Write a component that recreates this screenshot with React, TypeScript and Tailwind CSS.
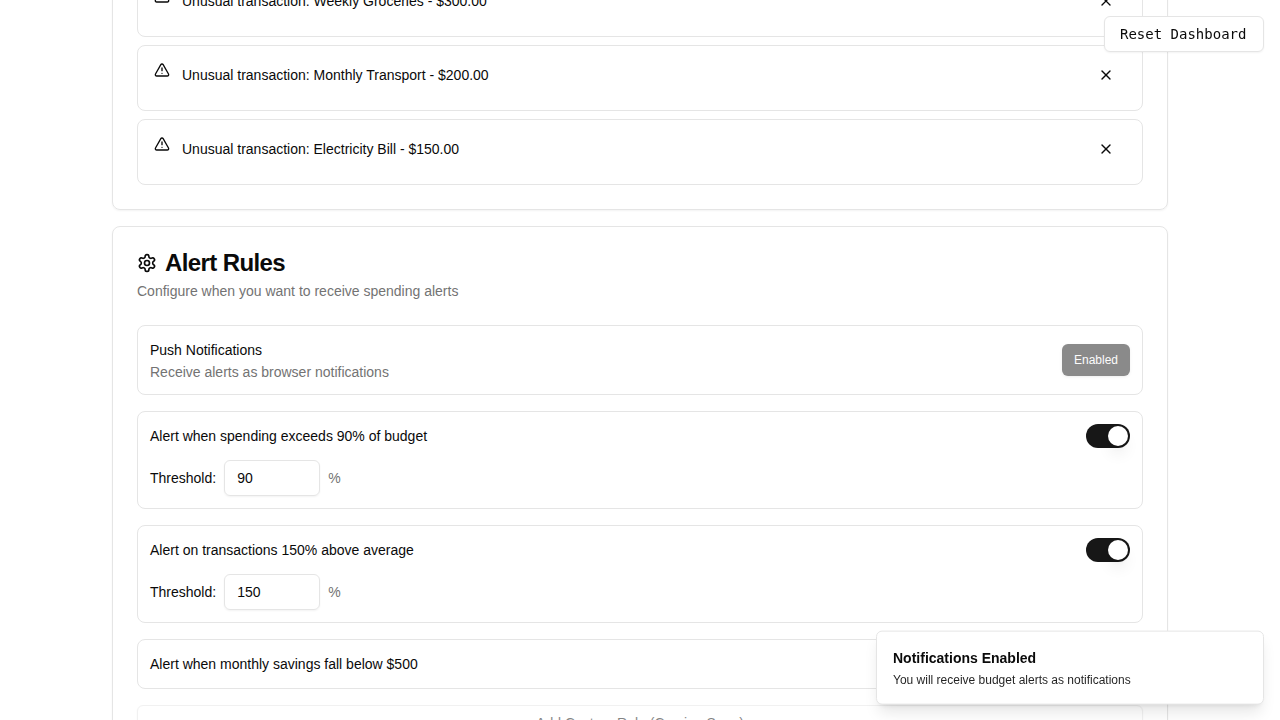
import React, { useState } from "react";
import { TriangleAlert, X } from "lucide-react";

const transactions = ["Weekly Groceries - $300.00", "Monthly Transport - $200.00", "Electricity Bill - $150.00"];

function GearIcon() {
  return (
    <svg
      viewBox="0 0 24 24"
      fill="none"
      stroke="currentColor"
      strokeWidth="2"
      strokeLinecap="round"
      strokeLinejoin="round"
      className="h-5 w-5"
    >
      <path d="M12.22 2h-.44a2 2 0 0 0-2 2v.18a2 2 0 0 1-1 1.73l-.43.25a2 2 0 0 1-2 0l-.15-.08a2 2 0 0 0-2.73.73l-.22.38a2 2 0 0 0 .73 2.73l.15.1a2 2 0 0 1 1 1.72v.51a2 2 0 0 1-1 1.74l-.15.09a2 2 0 0 0-.73 2.73l.22.38a2 2 0 0 0 2.73.73l.15-.08a2 2 0 0 1 2 0l.43.25a2 2 0 0 1 1 1.73V20a2 2 0 0 0 2 2h.44a2 2 0 0 0 2-2v-.18a2 2 0 0 1 1-1.73l.43-.25a2 2 0 0 1 2 0l.15.08a2 2 0 0 0 2.73-.73l.22-.39a2 2 0 0 0-.73-2.73l-.15-.08a2 2 0 0 1-1-1.74v-.5a2 2 0 0 1 1-1.74l.15-.09a2 2 0 0 0 .73-2.73l-.22-.38a2 2 0 0 0-2.73-.73l-.15.08a2 2 0 0 1-2 0l-.43-.25a2 2 0 0 1-1-1.73V4a2 2 0 0 0-2-2z" />
      <circle cx="12" cy="12" r="3" />
    </svg>
  );
}

function AlertItem({ text }: { text: string }) {
  return (
    <div className="flex h-[66px] items-start rounded-lg border border-neutral-200 px-4">
      <TriangleAlert className="mt-4 h-4 w-4 shrink-0" />
      <div className="ml-3 mt-[19px] flex-1 text-sm">Unusual transaction: {text}</div>
      <button className="mr-3 mt-[21px]" aria-label="Dismiss">
        <X className="h-4 w-4" />
      </button>
    </div>
  );
}

function Toggle({ on, onClick }: { on: boolean; onClick: () => void }) {
  return (
    <button
      role="switch"
      aria-checked={on}
      onClick={onClick}
      className={`flex h-6 w-11 items-center rounded-full border-2 border-transparent ${on ? "justify-end bg-neutral-900" : "justify-start bg-neutral-200"}`}
    >
      <span className="h-5 w-5 rounded-full bg-white shadow-lg" />
    </button>
  );
}

function Rule({ label, threshold }: { label: string; threshold?: string }) {
  const [on, setOn] = useState(true);
  return (
    <div className="flex flex-col gap-3 rounded-lg border border-neutral-200 p-3">
      <div className="flex h-6 items-center justify-between">
        <span>{label}</span>
        <Toggle on={on} onClick={() => setOn(!on)} />
      </div>
      {threshold && (
        <div className="flex items-center gap-2">
          <span>Threshold:</span>
          <input
            defaultValue={threshold}
            className="h-9 w-24 rounded-md border border-neutral-200 bg-transparent px-3 py-1 text-sm shadow-xs outline-none"
          />
          <span className="text-neutral-500">%</span>
        </div>
      )}
    </div>
  );
}

export default function App() {
  return (
    <div className="h-screen overflow-hidden bg-white font-['Liberation_Sans',sans-serif] text-sm text-neutral-950">
      <main className="-mt-[54px] flex flex-col gap-4 px-28">
        <section className="flex flex-col gap-2 rounded-lg border border-neutral-200 p-6 shadow-xs">
          {transactions.map((t) => (
            <AlertItem key={t} text={t} />
          ))}
        </section>

        <section className="rounded-lg border border-neutral-200 p-6 shadow-xs">
          <header className="mb-6 flex flex-col gap-1.5">
            <h2 className="flex items-center gap-2 text-2xl leading-none font-semibold tracking-tight">
              <GearIcon />
              Alert Rules
            </h2>
            <p className="text-neutral-500">Configure when you want to receive spending alerts</p>
          </header>
          <div className="flex flex-col gap-4">
            <div className="flex items-center justify-between rounded-lg border border-neutral-200 p-3">
              <div>
                <div className="leading-6">Push Notifications</div>
                <p className="text-neutral-500">Receive alerts as browser notifications</p>
              </div>
              <button disabled className="h-8 rounded-md bg-neutral-900 px-3 text-xs text-neutral-50 opacity-50 shadow-sm">
                Enabled
              </button>
            </div>
            <Rule label="Alert when spending exceeds 90% of budget" threshold="90" />
            <Rule label="Alert on transactions 150% above average" threshold="150" />
            <Rule label="Alert when monthly savings fall below $500" />
            <button disabled className="h-9 rounded-md border border-neutral-200 opacity-50 shadow-xs">
              Add Custom Rule (Coming Soon)
            </button>
          </div>
        </section>
      </main>

      <button className="fixed top-4 right-4 h-9 w-40 rounded-md border border-neutral-200 bg-white pl-[15px] text-left font-['DejaVu_Sans_Mono',monospace] text-sm whitespace-nowrap shadow-xs">
        Reset Dashboard
      </button>

      <div className="fixed right-4 bottom-4 flex w-[388px] translate-y-[0.6px] flex-col gap-1 rounded-md border border-neutral-200 bg-white p-4 shadow-lg will-change-transform">
        <div className="font-semibold">Notifications Enabled</div>
        <div className="text-xs opacity-90">You will receive budget alerts as notifications</div>
      </div>
    </div>
  );
}
